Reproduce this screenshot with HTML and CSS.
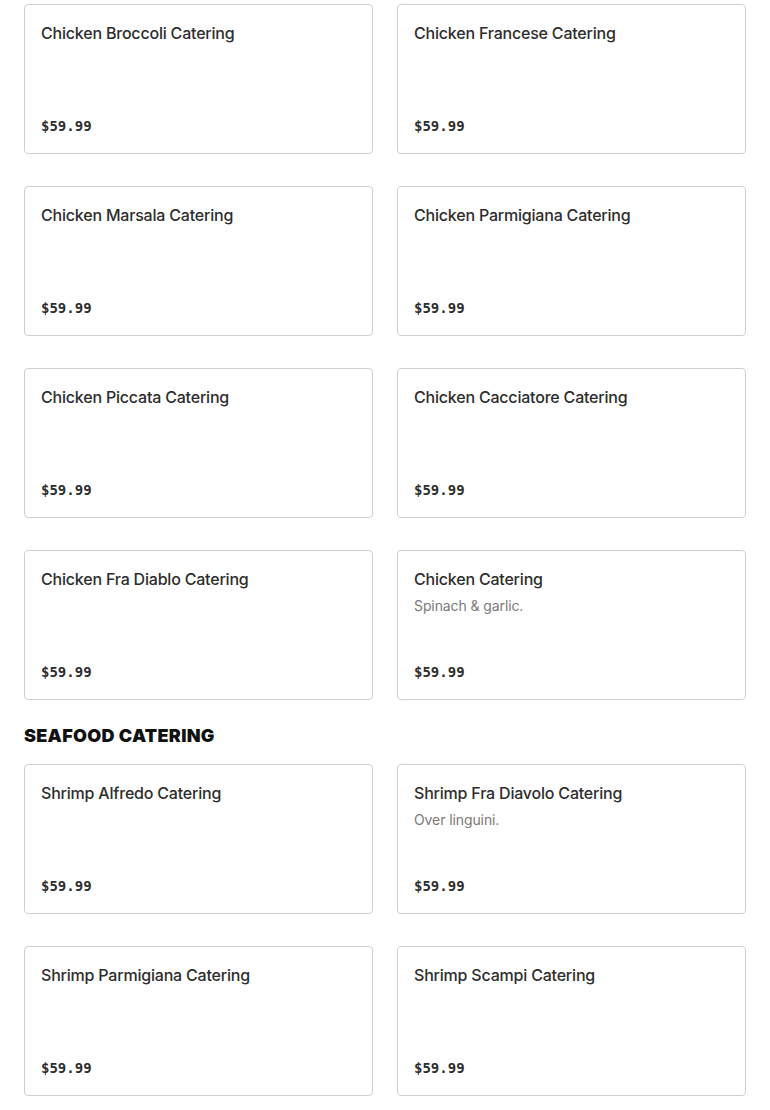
FILE: index.html
```html
<!doctype html>
<html lang="en">
<head>
	<meta charset="utf-8">
	<title>Catering Menu</title>
	<link rel="stylesheet" href="styles.css">
</head>
<body>
	<main class="menu">
		<section class="category">
			<div class="itemGrid">
				<article class="item">
					<h3 class="itemName">Chicken Broccoli Catering</h3>
					<p class="itemPrice">$59.99</p>
				</article>
				<article class="item">
					<h3 class="itemName">Chicken Francese Catering</h3>
					<p class="itemPrice">$59.99</p>
				</article>
				<article class="item">
					<h3 class="itemName">Chicken Marsala Catering</h3>
					<p class="itemPrice">$59.99</p>
				</article>
				<article class="item">
					<h3 class="itemName">Chicken Parmigiana Catering</h3>
					<p class="itemPrice">$59.99</p>
				</article>
				<article class="item">
					<h3 class="itemName">Chicken Piccata Catering</h3>
					<p class="itemPrice">$59.99</p>
				</article>
				<article class="item">
					<h3 class="itemName">Chicken Cacciatore Catering</h3>
					<p class="itemPrice">$59.99</p>
				</article>
				<article class="item">
					<h3 class="itemName">Chicken Fra Diablo Catering</h3>
					<p class="itemPrice">$59.99</p>
				</article>
				<article class="item">
					<h3 class="itemName">Chicken Catering</h3>
					<p class="itemDesc">Spinach &amp; garlic.</p>
					<p class="itemPrice">$59.99</p>
				</article>
			</div>
		</section>

		<section class="category">
			<h2 class="categoryTitle">Seafood Catering</h2>
			<div class="itemGrid">
				<article class="item">
					<h3 class="itemName">Shrimp Alfredo Catering</h3>
					<p class="itemPrice">$59.99</p>
				</article>
				<article class="item">
					<h3 class="itemName">Shrimp Fra Diavolo Catering</h3>
					<p class="itemDesc">Over linguini.</p>
					<p class="itemPrice">$59.99</p>
				</article>
				<article class="item">
					<h3 class="itemName">Shrimp Parmigiana Catering</h3>
					<p class="itemPrice">$59.99</p>
				</article>
				<article class="item">
					<h3 class="itemName">Shrimp Scampi Catering</h3>
					<p class="itemPrice">$59.99</p>
				</article>
			</div>
		</section>
	</main>
</body>
</html>
```

FILE: styles.css
```css
* {
	margin: 0;
	padding: 0;
	box-sizing: border-box;
}

body {
	background-color: #fff;
	font-family: Inter, "Liberation Sans", sans-serif;
	color: #2d2d2d;
}

.menu {
	padding: 4px 24px 0;
}

.category {
	margin-bottom: 24px;
}

.categoryTitle {
	font-family: Inter, "Liberation Sans", sans-serif;
	font-weight: 900;
	font-size: 18px;
	line-height: 24px;
	letter-spacing: 0.3px;
	text-transform: uppercase;
	color: #111;
	margin-bottom: 16px;
}

.itemGrid {
	display: grid;
	grid-template-columns: 1fr 1fr;
	gap: 32px 24px;
}

.item {
	height: 150px;
	padding: 16px 16px 17px;
	border: 1px solid #cfcfcf;
	border-radius: 4px;
	display: flex;
	flex-direction: column;
}

.itemName {
	font-size: 16px;
	font-weight: 500;
	line-height: 24px;
	letter-spacing: -0.2px;
	color: #2d2d2d;
}

.itemDesc {
	margin-top: 5px;
	font-size: 14px;
	line-height: 20px;
	letter-spacing: -0.1px;
	color: #7a7a7a;
}

.itemPrice {
	margin-top: auto;
	font-family: "DejaVu Sans Mono", "Liberation Mono", monospace;
	font-weight: bold;
	font-size: 14px;
	line-height: 20px;
	color: #2d2d2d;
}
```
